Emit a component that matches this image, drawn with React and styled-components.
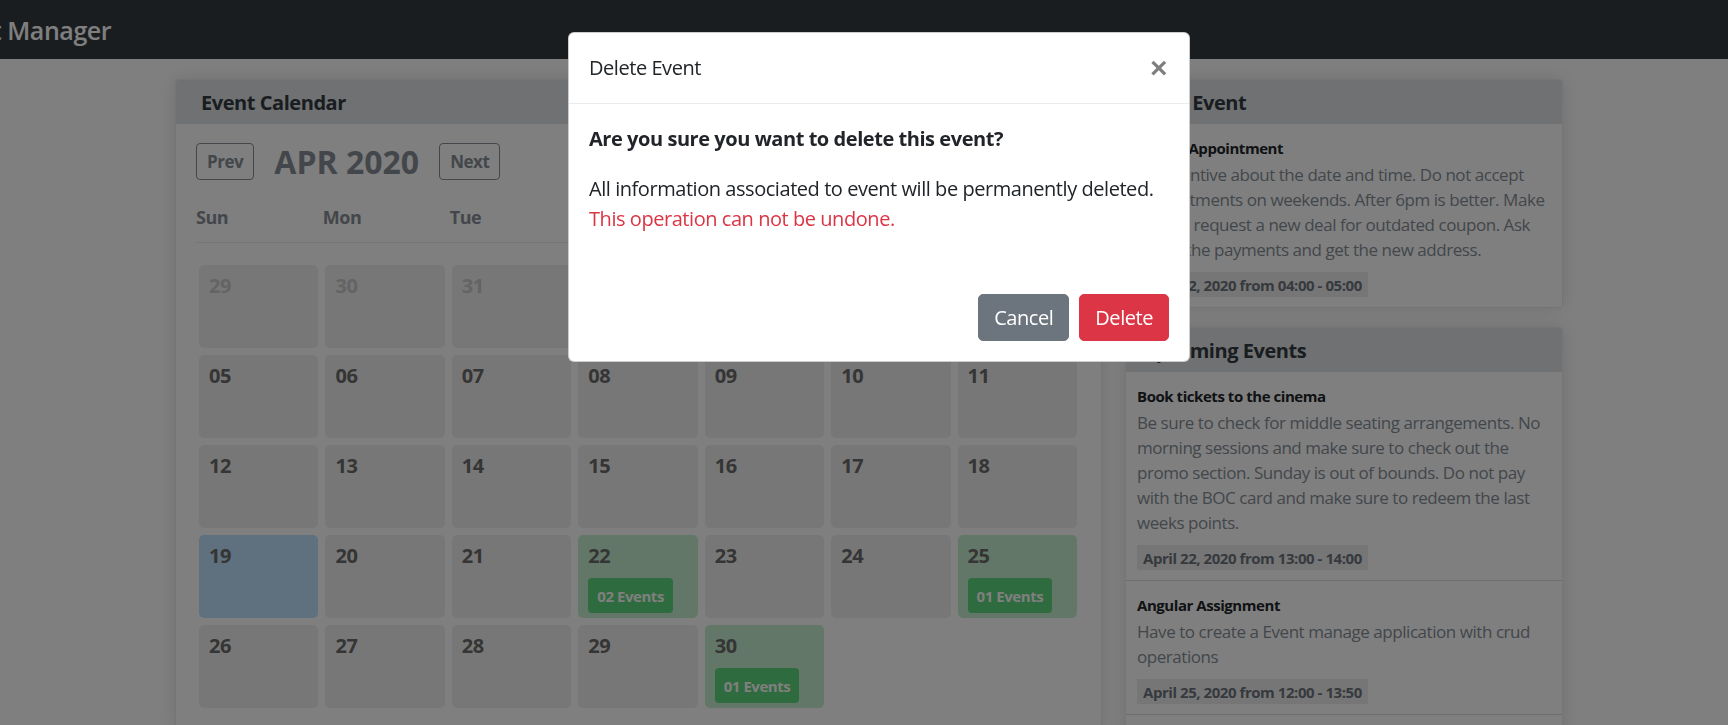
import styled, { createGlobalStyle } from 'styled-components';

const GlobalStyle = createGlobalStyle`
  * { box-sizing: border-box; }
  body {
    margin: 0;
    background: #fff;
    font-family: "Open Sans", "Noto Sans", sans-serif;
    letter-spacing: -0.028em;
    color: #212529;
    overflow: hidden;
  }
  button { letter-spacing: inherit; }
`;

const Navbar = styled.nav`
  height: 59px;
  background: #343a40;
  display: flex;
  align-items: center;
  overflow: hidden;
`;

const Brand = styled.a`
  margin-left: -64px;
  color: #fff;
  font-size: 25px;
  font-weight: 600;
  text-decoration: none;
  white-space: nowrap;
`;

const Main = styled.main`
  width: 1398px;
  margin: 20px auto 0;
  padding-left: 10px;
  display: grid;
  grid-template-columns: 927px 438px;
  gap: 23px;
  align-items: start;
`;

const Side = styled.div`
  display: flex;
  flex-direction: column;
  gap: 19px;
`;

const Card = styled.section`
  background: #fff;
  border: 1px solid rgba(0, 0, 0, 0.08);
  border-radius: 4px;
  box-shadow: 0 0 18px rgba(0, 0, 0, 0.12);
  overflow: hidden;
`;

const CardHeader = styled.h2`
  margin: 0;
  height: 44px;
  padding: 0 ${(p) => (p.$compact ? '15px' : '25px')};
  display: flex;
  align-items: center;
  background: #dee2e6;
  color: #343a40;
  font-size: 20px;
  font-weight: 700;
`;

const CalendarBody = styled.div`
  padding: 19px 20px 20px 19px;
`;

const Toolbar = styled.div`
  display: flex;
  align-items: center;
  gap: 20px;
  padding-left: 1px;
`;

const NavButton = styled.button`
  height: 37px;
  padding: 0 10px;
  border: 1px solid #868e96;
  border-radius: 4px;
  background: transparent;
  color: #868e96;
  font-family: inherit;
  font-size: 17px;
  font-weight: 700;
`;

const MonthTitle = styled.h1`
  margin: 0;
  color: #868e96;
  font-size: 32px;
  font-weight: 700;
  line-height: 37px;
  letter-spacing: 0;
`;

const WeekGrid = styled.div`
  display: grid;
  grid-template-columns: repeat(7, 1fr);
  gap: 7px;
  padding: 0 4px;
`;

const DayNames = styled(WeekGrid)`
  margin-top: 25px;
  padding: 0 4px 13px 1px;
  border-bottom: 1px solid #ebebeb;
`;

const DayName = styled.div`
  color: #868e96;
  font-size: 18px;
  font-weight: 700;
  line-height: 24px;
`;

const Days = styled(WeekGrid)`
  margin-top: 22px;
`;

const cellColors = {
  muted: '#efefef',
  plain: '#efefef',
  today: '#bee0ff',
  event: '#c6efd0',
};

const Cell = styled.div`
  height: 83px;
  padding: 9px 10px 0;
  border-radius: 5px;
  background: ${(p) => cellColors[p.$kind]};
`;

const DayNumber = styled.div`
  color: ${(p) => (p.$muted ? '#c8c8c8' : '#6a6a6a')};
  font-size: 20px;
  font-weight: 700;
  line-height: 24px;
`;

const EventBadge = styled.span`
  display: inline-flex;
  align-items: center;
  height: 35px;
  margin-top: 10px;
  padding: 0 9px;
  border-radius: 4px;
  background: #5cd67c;
  color: #fff;
  font-size: 15px;
  font-weight: 700;
`;

const EventItem = styled.article`
  padding: 14px 11px 10px;
  border-bottom: ${(p) => (p.$last ? 'none' : '1px solid #dcdcdc')};
`;

const EventTitle = styled.h3`
  margin: 0;
  color: #212529;
  font-size: 15px;
  font-weight: 700;
  line-height: 20px;
`;

const EventText = styled.p`
  margin: 4px 0 0;
  color: #868e96;
  font-size: 17px;
  line-height: 25px;
`;

const DateTag = styled.span`
  display: inline-flex;
  align-items: center;
  height: 25px;
  margin-top: 10px;
  padding: 0 6px;
  background: #ececec;
  color: #6c757d;
  font-size: 15px;
  font-weight: 700;
`;

const Backdrop = styled.div`
  position: fixed;
  inset: 0;
  background: rgba(0, 0, 0, 0.5);
`;

const ModalDialog = styled.div`
  position: fixed;
  top: 32px;
  left: 568px;
  width: 622px;
  background: #fff;
  border: 1px solid rgba(0, 0, 0, 0.2);
  border-radius: 6px;
`;

const ModalHeader = styled.header`
  display: flex;
  align-items: center;
  justify-content: space-between;
  padding: 20px 22px 20px 20px;
  border-bottom: 1px solid #e9ecef;
`;

const ModalTitle = styled.h5`
  margin: 0;
  font-size: 20px;
  font-weight: 500;
  line-height: 30px;
`;

const CloseButton = styled.button`
  padding: 0;
  border: 0;
  background: transparent;
  color: #000;
  opacity: 0.5;
  font-family: "Liberation Sans", sans-serif;
  font-size: 30px;
  font-weight: 700;
  line-height: 30px;
`;

const ModalBody = styled.div`
  padding: 20px;
  font-size: 20px;
  line-height: 30px;
`;

const Question = styled.p`
  margin: 0 0 20px;
  font-weight: 700;
`;

const Warning = styled.p`
  margin: 0 0 20px;
`;

const Danger = styled.span`
  display: block;
  color: #dc3545;
`;

const ModalFooter = styled.footer`
  display: flex;
  justify-content: flex-end;
  padding: 15px;
`;

const ActionButton = styled.button`
  margin: 5px;
  padding: 7.5px 15px;
  border: 1px solid ${(p) => p.$bg};
  border-radius: 5px;
  background: ${(p) => p.$bg};
  color: #fff;
  font-family: inherit;
  font-size: 20px;
  line-height: 30px;
`;

const weeks = [
  ['29m', '30m', '31m', '01', '02', '03', '04'],
  ['05', '06', '07', '08', '09', '10', '11'],
  ['12', '13', '14', '15', '16', '17', '18'],
  ['19', '20', '21', '22', '23', '24', '25'],
  ['26', '27', '28', '29', '30'],
];

const events = { '22': '02 Events', '25': '01 Events', '30': '01 Events' };

const upcoming = [
  {
    title: 'Book tickets to the cinema',
    text: 'Be sure to check for middle seating arrangements. No morning sessions and make sure to check out the promo section. Sunday is out of bounds. Do not pay with the BOC card and make sure to redeem the last weeks points.',
    date: 'April 22, 2020 from 13:00 - 14:00',
  },
  {
    title: 'Angular Assignment',
    text: 'Have to create a Event manage application with crud operations',
    date: 'April 25, 2020 from 12:00 - 13:50',
  },
  {
    title: 'Pay the electricity bill',
    text: 'Check the last months statement before paying the bill online.',
    date: 'April 30, 2020 from 09:00 - 10:00',
  },
];

function Calendar() {
  return (
    <Card>
      <CardHeader>Event Calendar</CardHeader>
      <CalendarBody>
        <Toolbar>
          <NavButton>Prev</NavButton>
          <MonthTitle>APR 2020</MonthTitle>
          <NavButton>Next</NavButton>
        </Toolbar>
        <DayNames>
          {['Sun', 'Mon', 'Tue', 'Wed', 'Thu', 'Fri', 'Sat'].map((d) => (
            <DayName key={d}>{d}</DayName>
          ))}
        </DayNames>
        <Days>
          {weeks.flat().map((raw, i) => {
            const muted = raw.endsWith('m');
            const day = raw.replace('m', '');
            const badge = !muted && events[day];
            const kind = muted ? 'muted' : day === '19' ? 'today' : badge ? 'event' : 'plain';
            return (
              <Cell key={i} $kind={kind}>
                <DayNumber $muted={muted}>{day}</DayNumber>
                {badge && <EventBadge>{badge}</EventBadge>}
              </Cell>
            );
          })}
        </Days>
      </CalendarBody>
    </Card>
  );
}

function EventEntry({ event, last }) {
  return (
    <EventItem $last={last}>
      <EventTitle>{event.title}</EventTitle>
      <EventText>{event.text}</EventText>
      <DateTag>{event.date}</DateTag>
    </EventItem>
  );
}

export default function App() {
  return (
    <>
      <GlobalStyle />
      <Navbar>
        <Brand href="#">Event Manager</Brand>
      </Navbar>
      <Main>
        <Calendar />
        <Side>
          <Card>
            <CardHeader $compact>Next Event</CardHeader>
            <EventEntry
              last
              event={{
                title: 'Doctor Appointment',
                text: 'Be attentive about the date and time. Do not accept appointments on weekends. After 6pm is better. Make sure to request a new deal for outdated coupon. Ask about the payments and get the new address.',
                date: 'April 22, 2020 from 04:00 - 05:00',
              }}
            />
          </Card>
          <Card>
            <CardHeader $compact>Upcoming Events</CardHeader>
            {upcoming.map((e, i) => (
              <EventEntry key={e.title} event={e} last={i === upcoming.length - 1} />
            ))}
          </Card>
        </Side>
      </Main>
      <Backdrop />
      <ModalDialog role="dialog">
        <ModalHeader>
          <ModalTitle>Delete Event</ModalTitle>
          <CloseButton aria-label="Close">×</CloseButton>
        </ModalHeader>
        <ModalBody>
          <Question>Are you sure you want to delete this event?</Question>
          <Warning>
            All information associated to event will be permanently deleted.
            <Danger>This operation can not be undone.</Danger>
          </Warning>
        </ModalBody>
        <ModalFooter>
          <ActionButton $bg="#6c757d">Cancel</ActionButton>
          <ActionButton $bg="#dc3545">Delete</ActionButton>
        </ModalFooter>
      </ModalDialog>
    </>
  );
}
